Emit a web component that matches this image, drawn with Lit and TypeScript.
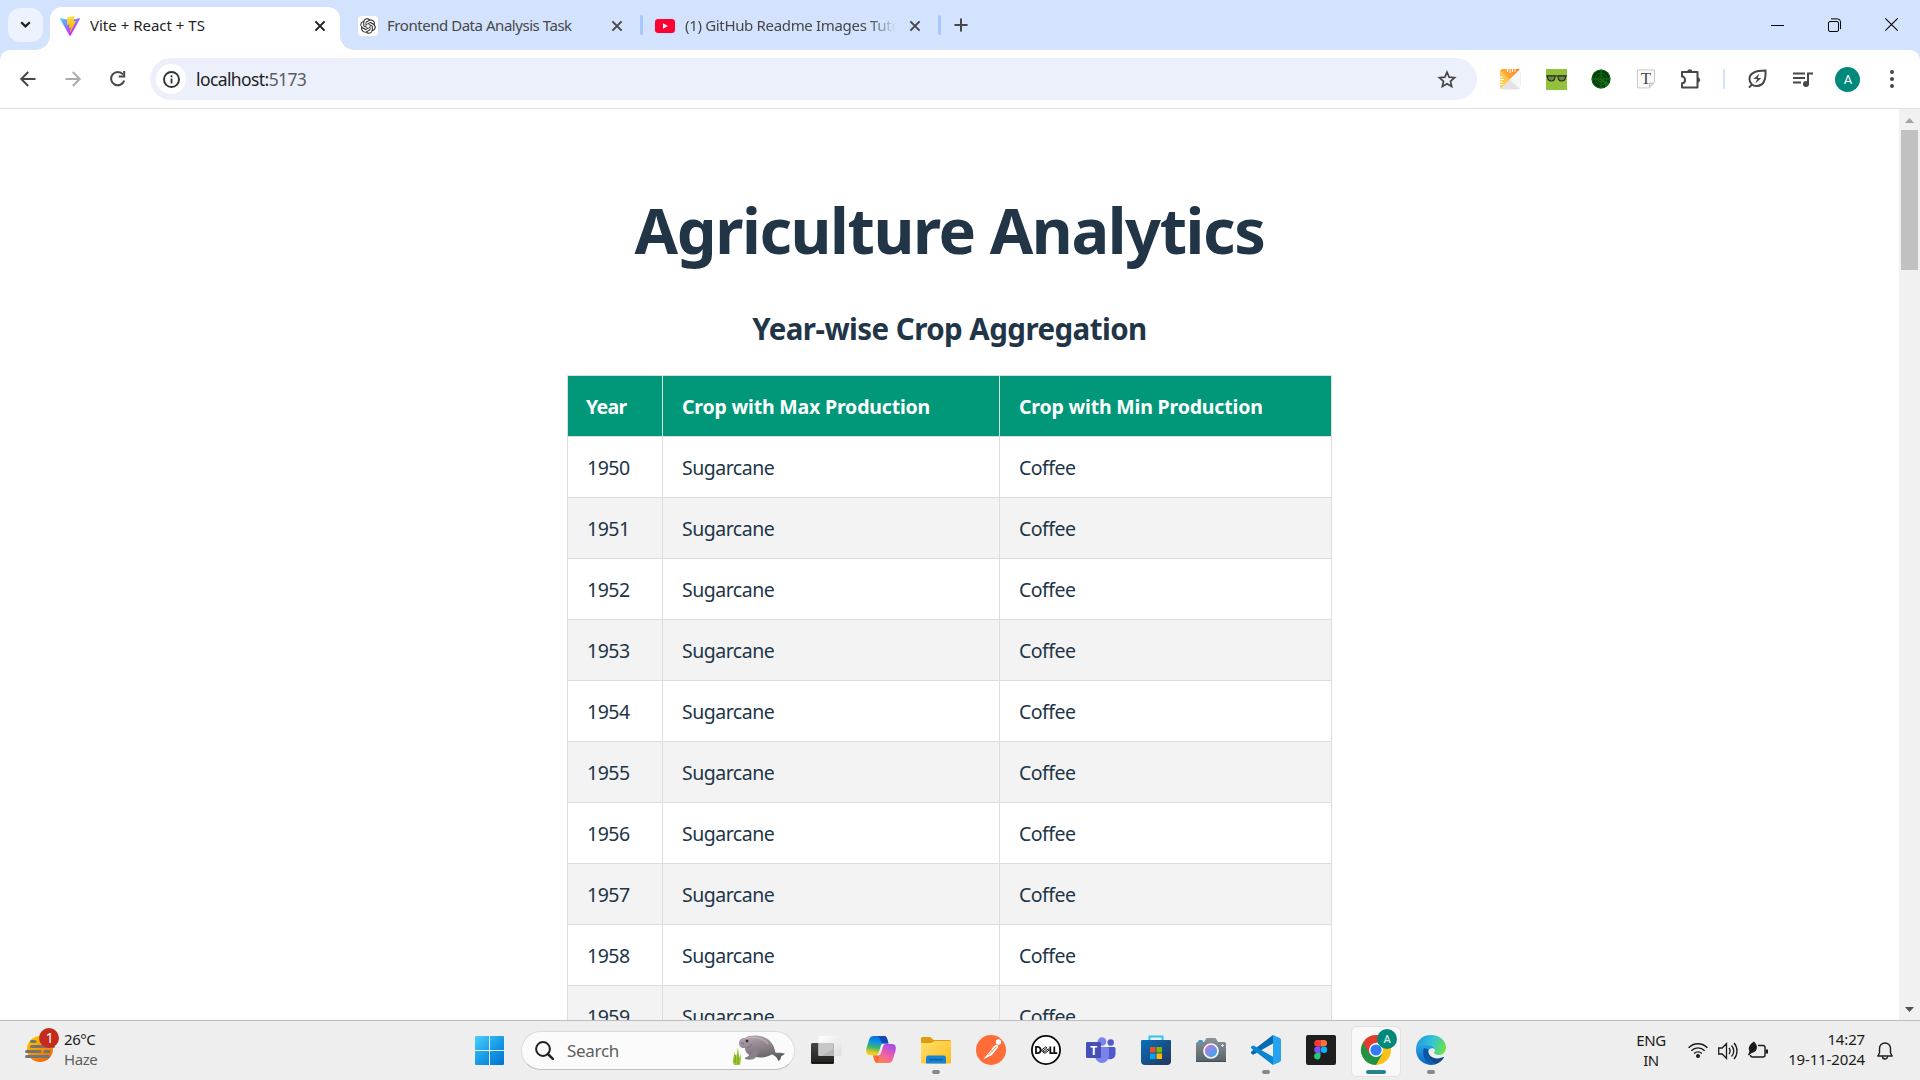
import { LitElement, html, css, svg } from "lit";
import { customElement } from "lit/decorators.js";

const base = css`
  :host { display: block; }
  * { box-sizing: border-box; }
  svg { display: block; flex: none; overflow: visible; }
  .row { display: flex; align-items: center; }
`;

const closeIcon = html`<svg width="12" height="12" viewBox="0 0 12 12"><path d="M1.4 1.4 10.6 10.6M10.6 1.4 1.4 10.6" stroke="currentColor" stroke-width="2" fill="none"/></svg>`;

const viteIcon = html`<svg width="20" height="20" viewBox="0 0 256 257">
  <defs>
    <linearGradient id="va" x1="-.8%" x2="57.6%" y1="7.6%" y2="78.4%"><stop offset="0" stop-color="#41D1FF"/><stop offset="1" stop-color="#BD34FE"/></linearGradient>
    <linearGradient id="vb" x1="43.4%" x2="50.3%" y1="2.2%" y2="89%"><stop offset="0" stop-color="#FFEA83"/><stop offset=".083" stop-color="#FFDD35"/><stop offset="1" stop-color="#FFA800"/></linearGradient>
  </defs>
  <path fill="url(#va)" d="M255.153 37.938 134.897 252.976c-2.483 4.44-8.862 4.466-11.382.048L.875 37.958c-2.746-4.814 1.371-10.646 6.827-9.67l120.385 21.517a6.537 6.537 0 0 0 2.322-.004l117.867-21.483c5.438-.991 9.574 4.796 6.877 9.62Z"/>
  <path fill="url(#vb)" d="M185.432.063 96.44 17.501a3.268 3.268 0 0 0-2.634 3.014l-5.474 92.456a3.268 3.268 0 0 0 3.997 3.378l24.777-5.718c2.318-.535 4.413 1.507 3.936 3.838l-7.361 36.047c-.495 2.426 1.782 4.5 4.151 3.78l15.304-4.649c2.372-.72 4.652 1.36 4.15 3.788l-11.698 56.621c-.732 3.542 3.979 5.473 5.943 2.437l1.313-2.028 72.516-144.72c1.215-2.423-.88-5.186-3.54-4.672l-25.505 4.922c-2.396.462-4.435-1.77-3.759-4.114l16.646-57.705c.677-2.35-1.37-4.583-3.769-4.113Z"/>
</svg>`;

const gptIcon = html`<svg width="20" height="20" viewBox="0 0 20 20"><rect width="20" height="20" rx="4" fill="#fff"/>
  <g transform="translate(2.2 2.2) scale(.65)"><path fill="#222" d="M22.2819 9.8211a5.9847 5.9847 0 0 0-.5157-4.9108 6.0462 6.0462 0 0 0-6.5098-2.9A6.0651 6.0651 0 0 0 4.9807 4.1818a5.9847 5.9847 0 0 0-3.9977 2.9 6.0462 6.0462 0 0 0 .7427 7.0966 5.98 5.98 0 0 0 .511 4.9107 6.051 6.051 0 0 0 6.5146 2.9001A5.9847 5.9847 0 0 0 13.2599 24a6.0557 6.0557 0 0 0 5.7718-4.2058 5.9894 5.9894 0 0 0 3.9977-2.9001 6.0557 6.0557 0 0 0-.7475-7.0729zm-9.022 12.6081a4.4755 4.4755 0 0 1-2.8764-1.0408l.1419-.0804 4.7783-2.7582a.7948.7948 0 0 0 .3927-.6813v-6.7369l2.02 1.1686a.071.071 0 0 1 .038.052v5.5826a4.504 4.504 0 0 1-4.4945 4.4944zm-9.6607-4.1254a4.4708 4.4708 0 0 1-.5346-3.0137l.142.0852 4.783 2.7582a.7712.7712 0 0 0 .7806 0l5.8428-3.3685v2.3324a.0804.0804 0 0 1-.0332.0615L9.74 19.9502a4.4992 4.4992 0 0 1-6.1408-1.6464zM2.3408 7.8956a4.485 4.485 0 0 1 2.3655-1.9728V11.6a.7664.7664 0 0 0 .3879.6765l5.8144 3.3543-2.0201 1.1685a.0757.0757 0 0 1-.071 0l-4.8303-2.7865A4.504 4.504 0 0 1 2.3408 7.872zm16.5963 3.8558L13.1038 8.364 15.1192 7.2a.0757.0757 0 0 1 .071 0l4.8303 2.7913a4.4944 4.4944 0 0 1-.6765 8.1042v-5.6772a.79.79 0 0 0-.407-.667zm2.0107-3.0231l-.142-.0852-4.7735-2.7818a.7759.7759 0 0 0-.7854 0L9.409 9.2297V6.8974a.0662.0662 0 0 1 .0284-.0615l4.8303-2.7866a4.4992 4.4992 0 0 1 6.6802 4.66zM8.3065 12.863l-2.02-1.1638a.0804.0804 0 0 1-.038-.0567V6.0742a4.4992 4.4992 0 0 1 7.3757-3.4537l-.142.0805L8.704 5.459a.7948.7948 0 0 0-.3927.6813zm1.0976-2.3654l2.602-1.4998 2.6069 1.4998v2.9994l-2.5974 1.4997-2.6067-1.4997Z"/></g></svg>`;

const youtubeIcon = html`<svg width="20" height="14" viewBox="0 0 20 14"><rect width="20" height="14" rx="3.2" fill="#ff0033"/><path d="M8 4.2v5.6L13 7z" fill="#fff"/></svg>`;

@customElement("browser-tabs")
class BrowserTabs extends LitElement {
  static styles = [base, css`
    .strip { height: 50px; background: #d3e3fd; padding-left: 8px; font: 15px/20px "Noto Sans", "Open Sans", sans-serif; color: #474747; }
    .search { width: 35px; height: 34px; border-radius: 12px; background: #ecf3fe; justify-content: center; color: #1f1f1f; }
    .tab { height: 43px; align-self: flex-end; padding: 0 8px; padding-bottom: 16px; padding-top: 11px; }
    .active { width: 290px; margin-left: 7px; background: #fff; border-radius: 12px 12px 0 0; color: #1f1f1f; padding-left: 10px; padding-right: 14px; position: relative; }
    .active::before, .active::after { content: ""; position: absolute; bottom: 0; width: 14px; height: 14px; }
    .active::before { left: -14px; background: radial-gradient(circle at 0 0, transparent 13.5px, #fff 14px); }
    .active::after { right: -14px; background: radial-gradient(circle at 100% 0, transparent 13.5px, #fff 14px); }
    .label { white-space: nowrap; overflow: hidden; flex: 1; margin-left: 10px; padding-bottom: 2px; }
    .l1 { letter-spacing: 0; }
    .l2 { letter-spacing: -.46px; margin-left: 9px; }
    .l3 { letter-spacing: -.33px; -webkit-mask-image: linear-gradient(90deg, #000 184px, transparent 211px); mask-image: linear-gradient(90deg, #000 184px, transparent 211px); flex: none; width: 211px; margin-right: 13px; }
    .second { width: 300px; padding-left: 18px; padding-right: 17px; }
    .third { width: 295px; padding-left: 12px; padding-right: 18px; }
    .sep { width: 3px; height: 20px; border-radius: 2px; background: #a8c7fa; }
    .plus { margin-left: 13px; }
    .controls { margin-left: auto; color: #000; padding-right: 22px; gap: 44px; padding-bottom: 1px; }
  `];
  render() {
    return html`<div class="strip row">
      <div class="search row"><svg width="11" height="8" viewBox="0 0 11 8"><path d="M1.2 1.2 5.5 5.4 9.8 1.2" fill="none" stroke="currentColor" stroke-width="2.2"/></svg></div>
      <div class="tab active row">${viteIcon}<span class="label l1">Vite + React + TS</span>${closeIcon}</div>
      <div class="tab second row">${gptIcon}<span class="label l2">Frontend Data Analysis Task</span>${closeIcon}</div>
      <div class="sep"></div>
      <div class="tab third row">${youtubeIcon}<span class="label l3">(1) GitHub Readme Images Tutorial</span>${closeIcon}</div>
      <div class="sep"></div>
      <svg class="plus" width="14" height="14" viewBox="0 0 14 14"><path d="M7 .5v13M.5 7h13" stroke="currentColor" stroke-width="2"/></svg>
      <div class="controls row">
        <svg width="13" height="14" viewBox="0 0 13 14"><path d="M0 7.5h13" stroke="#000"/></svg>
        <svg width="13" height="14" viewBox="0 0 13 14"><rect x=".5" y="3.5" width="10" height="10" rx="1.5" fill="none" stroke="#000"/><path d="M3 .9h6.5a3 3 0 0 1 3 3v7.200" fill="none" stroke="#000"/></svg>
        <svg width="13" height="13" viewBox="0 0 13 13"><path d="M.3.3l12.400 12.400M12.700.3.3 12.700" stroke="#000" stroke-width="1.100"/></svg>
      </div>
    </div>`;
  }
}

@customElement("browser-toolbar")
class BrowserToolbar extends LitElement {
  static styles = [base, css`
    :host { background: #d3e3fd; }
    .bar { height: 59px; background: #fff; border-radius: 10px 10px 0 0; border-bottom: 1px solid #e1e1e1; padding-left: 20px; color: #474747; }
    .nav { gap: 29px; width: 130px; }
    .omni { width: 1327px; height: 42px; border-radius: 21px; background: #ecf0fa; padding: 0 20px 0 6px; font: 17.5px/24px "Noto Sans", "Open Sans", sans-serif; letter-spacing: -.6px; color: #5a5d63; }
    .info { width: 30px; height: 30px; border-radius: 50%; background: #fff; justify-content: center; margin-right: 10px; }
    .host { color: #1f1f1f; }
    .star { margin-left: auto; }
    .ext { margin-left: 23px; gap: 24.6px; }
    .sep { width: 2px; height: 20px; background: #d3e3fd; margin: 0 23px 0 21px; }
    .music { margin-left: 26px; }
    .avatar { width: 25px; height: 25px; border-radius: 50%; background: #00897b; color: #fff; justify-content: center; font: 13px/25px Roboto, sans-serif; margin: 0 30px 0 22px; }
  `];
  render() {
    return html`<div class="bar row">
      <div class="nav row">
        <svg width="16" height="16" viewBox="0 0 16 16"><path d="M15.500 8H2M8.200 1 1.300 8l6.900 7" fill="none" stroke="#474747" stroke-width="2"/></svg>
        <svg width="16" height="16" viewBox="0 0 16 16"><path d="M.5 8H14M7.800 1l6.900 7-6.900 7" fill="none" stroke="#ababab" stroke-width="2"/></svg>
        <svg width="16" height="16" viewBox="0 0 16 16"><path d="M14.200 9.500A6.700 6.700 0 1 1 13 3.400" fill="none" stroke="#474747" stroke-width="2"/><path d="M15.200 0v6.500H8.700V4.600h4.500V0z" fill="#474747"/></svg>
      </div>
      <div class="omni row">
        <div class="info row"><svg width="17" height="17" viewBox="0 0 17 17"><circle cx="8.500" cy="8.500" r="7.500" fill="none" stroke="#303236" stroke-width="1.900"/><path d="M8.500 7.600v4.900M8.500 4.300v1.900" stroke="#303236" stroke-width="1.800"/></svg></div>
        <span><span class="host">localhost:</span>5173</span>
        <svg class="star" width="20" height="19" viewBox="0 0 20 19"><path d="m10 2.200 2.150 5 5.400.48-4.080 3.570 1.220 5.300L10 13.750l-4.690 2.800 1.220-5.300L2.450 7.680l5.400-.48z" fill="none" stroke="#474747" stroke-width="1.700"/></svg>
      </div>
      <div class="ext row">
        <svg width="21" height="21" viewBox="0 0 21 21"><defs><linearGradient id="o" x1="0" y1="1" x2="1" y2="0"><stop offset="0" stop-color="#ffd65c"/><stop offset="1" stop-color="#ff7d1a"/></linearGradient></defs>
          <rect x="1" y="1" width="19" height="19" rx="3" fill="#eee" stroke="#e2e2e2"/><path d="M10 11 20 1v19z" fill="#f7f7f7"/><path d="m1 20 9-9 10 9z" fill="#e3e3e5"/><path d="M3 0h17L0 20V3a3 3 0 0 1 3-3z" fill="url(#o)"/><path d="M0 1l10 10L0 20z" fill="#ffd25a" opacity=".6"/><path d="M7.500 0v3M10 0v4M12.500 0v3M15 0v3M0 8h3M0 10.500h4M0 13h3M0 15.500h3" stroke="#fff" stroke-width="1"/></svg>
        <svg width="21" height="21" viewBox="0 0 21 21"><rect width="21" height="21" fill="#93c13e"/><path d="M0 6.200h21v1.300H0z" fill="#3d4a26"/><path d="M1.500 7h7.500c.4 3-1 5-3.700 5S1.300 10 1.500 7zM12 7h7.500c.2 3-1 5-3.800 5S11.600 10 12 7z" fill="#72864d" stroke="#293119" stroke-width="1.200"/></svg>
        <svg width="20" height="20" viewBox="0 0 20 20"><circle cx="10" cy="10" r="9.500" fill="#073d08"/><path d="M10 1v18M1 10h18" stroke="#1d8a22" stroke-width=".7"/><g fill="none" stroke="#16721a" stroke-width=".8"><circle cx="10" cy="10" r="3"/><circle cx="10" cy="10" r="6"/><circle cx="10" cy="10" r="9"/></g><path d="M10 10l8 4-3 4z" fill="#23b32b" opacity=".4"/></svg>
        <svg width="20" height="20" viewBox="0 0 20 20"><path d="M1.500.9h17v12.500l-5 5.500h-12z" fill="#fafafa" stroke="#c4c4c4" stroke-width=".9"/><path d="M13.500 18.500v-4.400h4.300" fill="#ddd" stroke="#aaa" stroke-width=".7"/><text x="10" y="15" text-anchor="middle" font-family="Liberation Serif,serif" font-size="17" fill="#484848">T</text></svg>
        <svg width="22" height="21" viewBox="0 0 22 21"><path d="M2 3h15.500v15.500H2v-4.300c4 0 4-6.600 0-6.600z" fill="none" stroke="#474747" stroke-width="2" stroke-linejoin="round"/><path d="M7 2.400a2.900 2.900 0 0 1 5.600 0zM18 8.200a2.900 2.900 0 0 1 0 5.600z" fill="#474747"/></svg>
      </div>
      <div class="sep"></div>
      <svg width="19" height="20" viewBox="0 0 19 20"><path d="M17.500 1.500c.5 8.500-1.500 15-8.500 15.500C4.500 17.300 1.500 14 1.500 10 1.500 3.500 8 1.500 17.500 1.500zM4.200 15.200 1 18.600" fill="none" stroke="#474747" stroke-width="2"/><path d="M11.500 4.500 5.500 10h3.700L7.300 14.500l6-5.500H9.600z" fill="#474747"/></svg>
      <svg class="music" width="20" height="17" viewBox="0 0 20 17"><path d="M0 2.500h12M0 7h12M0 11.500h8M15 13V2.500h5" fill="none" stroke="#474747" stroke-width="2"/><circle cx="13" cy="13" r="3" fill="#474747"/></svg>
      <div class="avatar row">A</div>
      <svg width="4" height="20" viewBox="0 0 4 20"><g fill="#474747"><circle cx="2" cy="3" r="2"/><circle cx="2" cy="10" r="2"/><circle cx="2" cy="17" r="2"/></g></svg>
    </div>`;
  }
}

@customElement("crop-page")
class CropPage extends LitElement {
  static styles = [base, css`
    .view { display: flex; height: 911px; overflow: hidden; background: #fff; color: #213547; font: 19.5px/30px "Noto Sans", "Open Sans", sans-serif; }
    .main { flex: 1; display: flex; flex-direction: column; align-items: center; }
    h1 { font-size: 63px; line-height: 70px; margin: 86px 0 0; letter-spacing: -1.4px; font-weight: 700; white-space: nowrap; }
    h2 { font-size: 29.500px; line-height: 45px; margin: 41px 0 24px; letter-spacing: -.55px; font-weight: 700; white-space: nowrap; }
    table { width: 765px; border-collapse: collapse; table-layout: fixed; flex: none; }
    th, td { height: 61px; padding: 2px 19px 0; border: 1px solid #ddd; text-align: left; white-space: nowrap; }
    td { letter-spacing: -.5px; }
    th { background: #009879; color: #fff; font-weight: 700; letter-spacing: -.18px; }
    th:first-child { letter-spacing: -.7px; padding-left: 18px; }
    tbody tr:nth-child(even) { background: #f3f3f3; }
    .c1 { width: 95px; }
    .c2 { width: 337px; }
    .scroll { width: 21px; background: #f1f1f1; display: flex; flex-direction: column; align-items: center; padding: 9px 0 8px; }
    .thumb { width: 17px; height: 140px; background: #c1c1c1; margin: 7px 0 auto; }
  `];
  render() {
    const years = Array.from({ length: 10 }, (_, i) => 1950 + i);
    return html`<div class="view">
      <div class="main">
        <h1>Agriculture Analytics</h1>
        <h2>Year-wise Crop Aggregation</h2>
        <table>
          <colgroup><col class="c1"><col class="c2"><col></colgroup>
          <thead><tr><th>Year</th><th>Crop with Max Production</th><th>Crop with Min Production</th></tr></thead>
          <tbody>${years.map((y) => html`<tr><td>${y}</td><td>Sugarcane</td><td>Coffee</td></tr>`)}</tbody>
        </table>
      </div>
      <div class="scroll">
        <svg width="9" height="5" viewBox="0 0 9 5"><path d="M0 5 4.500 0 9 5z" fill="#a3a3a3"/></svg>
        <div class="thumb"></div>
        <svg width="9" height="5" viewBox="0 0 9 5"><path d="M0 0h9L4.500 5z" fill="#505050"/></svg>
      </div>
    </div>`;
  }
}

const icon = (body: unknown) => html`<svg width="30" height="30" viewBox="0 0 30 30">${body}</svg>`;

const apps: { body: unknown; state?: string }[] = [
  { body: svg`<defs><linearGradient id="tv" x1="0" y1="0" x2="1" y2="1"><stop offset="0" stop-color="#fff"/><stop offset="1" stop-color="#dedede"/></linearGradient><linearGradient id="tk" x1="0" y1="0" x2="0" y2="1"><stop offset="0" stop-color="#444442"/><stop offset="1" stop-color="#20201e"/></linearGradient></defs><rect x="0" y="8" width="23" height="21" rx="1.500" fill="url(#tk)"/><path d="M0 27.500h23" stroke="#111"/><rect x="7.500" y="1" width="23" height="20" rx="1.500" fill="url(#tv)"/><path d="M8.500 8H22a1 1 0 0 1 1 1v12H9a1.500 1.500 0 0 1-1.500-1.500V8z" fill="#b6b6b5"/><path d="M8 8h14v6L10 21H7.500z" fill="#cecece" opacity=".7"/>` },
  { body: svg`<defs><linearGradient id="ca" x1=".5" y1="0" x2=".3" y2="1"><stop offset="0" stop-color="#0e6bdc"/><stop offset=".3" stop-color="#0a90e8"/><stop offset=".62" stop-color="#42b866"/><stop offset=".9" stop-color="#f4cc16"/></linearGradient><linearGradient id="cb" x1=".8" y1="0" x2=".2" y2="1"><stop offset="0" stop-color="#a348ef"/><stop offset=".5" stop-color="#ee5eaa"/><stop offset="1" stop-color="#ff8b3d"/></linearGradient></defs>
    <path d="M8 1h10c2.500 0 3 2 3.800 5l.7 2.500h-4.500c-2.500 0-3 1.500-3.700 4l-1.600 5C12 19.500 11 20 9 20H4C.5 20-.5 17 .5 13L3 5c.8-2.700 2-4 5-4z" fill="url(#ca)"/><path d="M10 1h8c2.500 0 3 2 3.800 5l.7 2.500H18c-2 0-2.800-1-3.600-3.500S12.500 1 10 1z" fill="#1647b8"/>
    <path d="M22 28H12c-2.500 0-3.500-2-4.200-5L7 20.500h4.500c2.500 0 3.200-1.500 4-4l1.500-5c.6-2 1.500-2.500 3.500-2.500H26c3.500 0 4.500 3 3.500 7L27 24c-.8 2.700-2 4-5 4z" fill="url(#cb)"/><path d="M12 28c-2.500 0-3.500-2-4.200-5L7 20.500h4c2 0 2.500 1 2 3.500S11 28 12 28z" fill="#fb6c34"/>` },
  { state: "open", body: svg`<defs><linearGradient id="fa" x1="0" y1="0" x2="1" y2="1"><stop offset="0" stop-color="#ffdf6e"/><stop offset="1" stop-color="#fcbd1c"/></linearGradient></defs><path d="M0 3.500A1.500 1.500 0 0 1 1.500 2H9c1.500 0 2.500 3 4 3h15.500A1.500 1.500 0 0 1 30 6.500V15H0z" fill="#dc9e0b"/><path d="M0 8h10l4-2h16v22.500H0z" fill="url(#fa)"/><path d="M5 28.500V23a2.500 2.500 0 0 1 2.500-2.500h15A2.500 2.500 0 0 1 25 23v5.500z" fill="#1583d4"/><path d="M9 24.700h12.500" stroke="#0b58a2" stroke-width="1.300" stroke-linecap="round"/>` },
  { body: svg`<circle cx="15" cy="15" r="15" fill="#ff6c37"/><circle cx="22.500" cy="7" r="2.700" fill="#fff"/><path d="M20.500 9.500c1.500.5 2.200 1.500 1.500 3l-6 7.500-9 4.500 6.500-7.500 4-5.500z" fill="#fff"/><path d="m20.500 11.500-8 8.500M17 16l-2.500-1.500" stroke="#ff6c37" stroke-width=".8"/>` },
  { body: svg`<circle cx="15" cy="15" r="14.100" fill="#fff" stroke="#0c0c0c" stroke-width="1.800"/><g fill="none" stroke="#111" stroke-width="1.800"><path d="M5 11.900v6.300h1.500c4.200 0 4.200-6.300 0-6.300zM19.300 11.500v6.600h3M23.300 11.500v6.600h3"/><path d="m10.200 15.300 4.500-3.400 1.200 1-4.200 3.300 1.300 1.100 4.200-3.400 1.100 1-4.500 3.500z" stroke-width="1"/></g>` },
  { body: svg`<circle cx="16" cy="6.500" r="4.300" fill="#7b83eb"/><circle cx="24.700" cy="7.500" r="3.200" fill="#5059c9"/><path d="M19 12h9a1.500 1.500 0 0 1 1.500 1.500V19a5.500 5.500 0 0 1-10.500 2z" fill="#5059c9"/><path d="M9 12h12.500a1.500 1.500 0 0 1 1.500 1.500V20c0 4-2.500 8-7 8s-7-4-7-8z" fill="#7b83eb"/><rect x="0" y="7" width="15" height="16" rx="1.200" fill="#464eb8"/><text x="7.500" y="19.500" text-anchor="middle" font-family="Noto Sans,sans-serif" font-weight="700" font-size="12" fill="#fff">T</text>` },
  { body: svg`<defs><linearGradient id="sa" x1="0" y1="0" x2="1" y2="1"><stop offset="0" stop-color="#0a70bc"/><stop offset="1" stop-color="#233558"/></linearGradient></defs><path d="M8.500 6V1.500h13V6" fill="none" stroke="#30c5f4" stroke-width="2"/><path d="M0 6a1 1 0 0 1 1-1h28a1 1 0 0 1 1 1v20a4 4 0 0 1-4 4H4a4 4 0 0 1-4-4z" fill="url(#sa)"/><path d="M9 12h5.500v5.500H9z" fill="#f25022"/><path d="M15.500 12H21v5.500h-5.500z" fill="#7fba00"/><path d="M9 18.500h5.500V24H9z" fill="#00a4ef"/><path d="M15.500 18.500H21V24h-5.500z" fill="#ffb900"/>` },
  { body: svg`<defs><linearGradient id="cm" x1="0" y1="0" x2="0" y2="1"><stop offset="0" stop-color="#8b949b"/><stop offset="1" stop-color="#596168"/></linearGradient><linearGradient id="cl" x1="0" y1="0" x2="1" y2="1"><stop offset=".2" stop-color="#b77ade"/><stop offset=".8" stop-color="#3ba7ee"/></linearGradient></defs><rect x="2" y="5" width="5" height="4" rx="1.500" fill="#27a0dc"/><path d="M0 8.500A1.500 1.500 0 0 1 1.500 7H8l2.500-4h9L22 7h6.500A1.500 1.500 0 0 1 30 8.500V27H0z" fill="url(#cm)"/><path d="M0 26.500h30" stroke="#444b52"/><circle cx="15" cy="16" r="7" fill="url(#cl)" stroke="#f4f4f4" stroke-width="1.700"/><path d="M26.500 9v3M25 10.500h3" stroke="#d8e5ef"/>` },
  { state: "open", body: svg`<path d="M22 0 .4 16.500a1.500 1.500 0 0 0 0 2.100l.8.700a1.500 1.500 0 0 0 1.900 0L22 8.500z" fill="#0069b2"/><path d="M.4 13.500 22 30v-8.300L3 10.800a1.500 1.500 0 0 0-2 .1L.3 11.600a1.500 1.500 0 0 0 .1 1.900z" fill="#0b85d0"/><path d="m22 0 6.800 3A2 2 0 0 1 30 4.800v20.400a2 2 0 0 1-1.200 1.800L22 30z" fill="#25a3ee"/>` },
  { body: svg`<rect width="30" height="30" rx="2" fill="#1e1e1e"/><path d="M14.500 5h-3a3.200 3.200 0 0 0 0 6.500h3z" fill="#ff3737"/><path d="M14.500 5h3.300a3.200 3.200 0 0 1 0 6.500h-3.300z" fill="#ff7237"/><path d="M14.500 11.500h-3a3.200 3.200 0 0 0 0 6.500h3z" fill="#874fff"/><circle cx="18" cy="14.700" r="3.200" fill="#00b6ff"/><path d="M14.500 18h-3a3.200 3.200 0 1 0 3 3.300z" fill="#24cb71"/>` },
  { state: "active", body: svg`<circle cx="15" cy="15" r="15" fill="#fbc116"/><path d="M15 15 2 7.500A15 15 0 0 0 15 30l6.500-11.300z" fill="#229342"/><path d="M15 15 8.500 18.700 2 7.500a15 15 0 0 1 26 0H15z" fill="#e33b2e"/><circle cx="15" cy="15" r="7" fill="#fff"/><circle cx="15" cy="15" r="5.600" fill="#2f7df4"/><circle cx="26" cy="4" r="10" fill="#00897b"/><text x="26" y="8" text-anchor="middle" font-family="Roboto,sans-serif" font-size="11" font-weight="500" fill="#c9ece8">A</text>` },
  { state: "open", body: svg`<defs><linearGradient id="ea" x1="0" y1=".3" x2="1" y2=".6"><stop offset="0" stop-color="#1e9be0"/><stop offset=".5" stop-color="#32c4d5"/><stop offset="1" stop-color="#6be14b"/></linearGradient><linearGradient id="eb" x1="0" y1="0" x2="0" y2="1"><stop offset="0" stop-color="#28a7e5"/><stop offset="1" stop-color="#0a64c4"/></linearGradient></defs><path d="M0 15C0 6 6 0 15 0s15 6 15 12.500c0 5-3.500 7.500-7 7.500-3 0-5-1-5-2.200 0-.7.900-1.200.9-3C19 12 16 9.500 11.500 9.500 5 9.500.5 13 0 17z" fill="url(#ea)"/><path d="M0 16c.5-4.500 5-6.800 10.500-6.800 5 0 8.300 2.500 8.400 5.300C17 12 12.500 13 11.500 17c-1.500 6 3 11 8 12.200A15 15 0 0 1 0 16z" fill="url(#eb)"/><path d="M12.500 14.500C10 21 14 27.500 19.500 29.300c3.500-1 6.500-3.500 8.300-6.600.3-.6-.2-.9-.7-.600C20 25.500 11 22 12.500 14.500z" fill="#114a8b"/><path d="M8 13c-3 7 2 16.500 11.500 16.300C14 27.500 10.500 21 12.500 14.500z" fill="#0c56aa"/>` },
];

@customElement("task-bar")
class TaskBar extends LitElement {
  static styles = [base, css`
    .bar { height: 60px; background: #eee; border-top: 1px solid #bcbcbc; font: 15px/20px "Noto Sans", "Open Sans", sans-serif; color: #1b1b1b; letter-spacing: -.45px; }
    .weather { width: 475px; padding-left: 25px; gap: 5px; }
    .temp { padding-bottom: 4px; }
    .muted { color: #5d5d5d; }
    .search { width: 274px; height: 39px; margin: 0 3px 0 17px; border: 1px solid #dcdcdc; border-bottom-color: #bfbfbf; border-radius: 20px; background: #fbfbfb; padding: 0 9px 0 13px; color: #5e5e5e; font-size: 17px; letter-spacing: -.3px; }
    .search span { margin-left: 13px; flex: 1; }
    .app { width: 55px; height: 59px; display: flex; flex-direction: column; align-items: center; padding-top: 14px; position: relative; isolation: isolate; }
    .active::before { content: ""; position: absolute; z-index: -1; left: 3px; top: 5px; width: 48px; height: 49px; border-radius: 6px; background: #f9f9f9; border: 1px solid #e2e2e2; }
    .open::after, .active::after { content: ""; margin-top: 5px; width: 8px; height: 4px; border-radius: 2px; background: #888; flex: none; }
    .active::after { width: 20px; background: #26838f; }
    .tray { margin-left: auto; padding-right: 27px; }
    .lang { text-align: center; margin-right: 22px; width: 30px; padding-bottom: 2px; }
    .sys { gap: 10px; }
    .clock { text-align: right; width: 86px; margin: 0 12px 0 11px; padding-bottom: 4px; white-space: nowrap; letter-spacing: -.15px; }
  `];
  render() {
    return html`<div class="bar row">
      <div class="weather row">
        <svg width="34" height="36" viewBox="0 6 34 36"><defs><linearGradient id="w" x1="0" y1="0" x2=".6" y2="1"><stop offset="0" stop-color="#ffd400"/><stop offset="1" stop-color="#f26a08"/></linearGradient></defs><circle cx="15" cy="22" r="13" fill="url(#w)"/><path d="M6.500 14.500H10M6.500 19.500h22M1.500 24.500h13.500M20 24.500h4M1.500 29.500h22" stroke="#747474" stroke-width="3" stroke-linecap="round"/><circle cx="24" cy="11" r="10" fill="#c42b1c"/><text x="24.500" y="16" text-anchor="middle" font-family="Noto Sans,sans-serif" font-size="14" fill="#fff">1</text></svg>
        <div class="temp">26°C<br><span class="muted">Haze</span></div>
      </div>
      <svg width="29" height="29" viewBox="0 0 29 29"><defs><linearGradient id="g" gradientUnits="userSpaceOnUse" x1="0" y1="0" x2="26" y2="29"><stop offset="0" stop-color="#4cd0fc"/><stop offset=".55" stop-color="#179be6"/><stop offset="1" stop-color="#0575d2"/></linearGradient></defs><path d="M1 0h13v14H0V1a1 1 0 0 1 1-1zM15 0h13a1 1 0 0 1 1 1v13H15zM0 15h14v14H1a1 1 0 0 1-1-1zM15 15h14v13a1 1 0 0 1-1 1H15z" fill="url(#g)"/></svg>
      <div class="search row">
        <svg width="19" height="19" viewBox="0 0 19 19"><circle cx="8" cy="8" r="6.900" fill="none" stroke="#222" stroke-width="2"/><path d="m12.800 12.800 5 5" stroke="#222" stroke-width="2.600" stroke-linecap="round"/></svg>
        <span>Search</span>
        <svg width="52" height="31" viewBox="0 0 52 31"><defs><linearGradient id="m" x1=".2" y1="0" x2=".6" y2="1"><stop offset="0" stop-color="#b3a6b2"/><stop offset=".6" stop-color="#84797f"/><stop offset="1" stop-color="#555c61"/></linearGradient></defs>
          <path d="M1 30c-3-5 1-8 0-13 3 4 1 5 2 7 0-4 2-6 1-11 3 4 1 7 2 10l2-4c0 4 0 7-1 11z" fill="#9fc831"/><path d="M2 28c0-4 1-6 0-8M5 29V19" stroke="#6f9c22" fill="none"/>
          <path d="M6 8c0-3 2-5 6-5 3-2.500 9-3 15-2 9 1.500 14 8 15 15 0 1.500 1 2 3 1.800 3 0 5 .2 7 .7-2 2-3 2.500-4 3 0 2-1 4-2.500 4.500-1-3-4-6-7-6.500-5 3-10 3.500-17 2.500-1 2-4 2.500-8 2.300-1-.3-1.500-1-1-2 2-.3 3-1 4-2.300-3-1.500-4.500-4-4.500-7-3 .5-6-1-6-5z" fill="url(#m)"/><path d="M24 13c2 4 1 8-3 11-3 1-8 1-9.500-.5 4-1 7-3.500 7.500-7.500" fill="#8c8189" opacity=".9"/><circle cx="14" cy="6" r="1.400" fill="#332d31"/><path d="M14 13c2-.5 4-2 4.500-4M8 8c1 0 2 .7 3 0" fill="none" stroke="#776b74"/><path d="M13 4c7-3 18-1 22 5" fill="none" stroke="#d1c5d0" stroke-width="1.500" opacity=".5"/></svg>
      </div>
      ${apps.map((a) => html`<div class="app ${a.state ?? ""}">${icon(a.body)}</div>`)}
      <div class="tray row">
        <div class="lang">ENG<br>IN</div>
        <div class="sys row">
          <svg width="20" height="16" viewBox="0 0 20 16"><g fill="none" stroke="#1b1b1b" stroke-width="1.400"><path d="M.6 4.800a13 13 0 0 1 18.800 0M3.400 7.700a9.200 9.200 0 0 1 13.200 0M6.200 10.500a5.300 5.300 0 0 1 7.600 0"/></g><circle cx="10" cy="13" r="2" fill="#1b1b1b"/></svg>
          <svg width="20" height="18" viewBox="0 0 20 18"><path d="M.7 6h3.500L8.500 1.500v15L4.200 12H.7zM11 6c1.300 1.700 1.300 4.300 0 6M13.500 3.500c3 3 3 8 0 11M16 1c4 4.500 4 11.500 0 16" fill="none" stroke="#1b1b1b" stroke-width="1.300"/></svg>
          <svg width="20" height="18" viewBox="0 0 20 18"><path d="M10 3.500h5a2 2 0 0 1 2 2v7.500a2 2 0 0 1-2 2H4.500a2 2 0 0 1-2-2" fill="none" stroke="#1b1b1b" stroke-width="1.400"/><path d="M17.500 7.500H20v4h-2.500z" fill="#1b1b1b"/><path d="M6-.5c3 3 3.500 5.500 2.500 8-.7 2-2.500 3-5 3.500L1 13.500l-1-.8 1.500-3.200C-.5 5.500 2 2 6-.5z" fill="#1b1b1b"/></svg>
        </div>
        <div class="clock">14:27<br>19-11-2024</div>
        <svg width="16" height="18" viewBox="0 0 16 18"><path d="M2.500 6.500a5.500 5.500 0 0 1 11 0V11l1.700 3H.8l1.700-3z" fill="none" stroke="#1b1b1b" stroke-width="1.400" stroke-linejoin="round"/><path d="M5.500 14.500a2.500 2.500 0 0 0 5 0" fill="none" stroke="#1b1b1b" stroke-width="1.400"/></svg>
      </div>
    </div>`;
  }
}

@customElement("app-root")
class AppRoot extends LitElement {
  static styles = [base, css`
    .screen { width: 1920px; height: 1080px; overflow: hidden; display: flex; flex-direction: column; }
  `];
  render() {
    return html`<div class="screen">
      <browser-tabs></browser-tabs>
      <browser-toolbar></browser-toolbar>
      <crop-page></crop-page>
      <task-bar></task-bar>
    </div>`;
  }
}
